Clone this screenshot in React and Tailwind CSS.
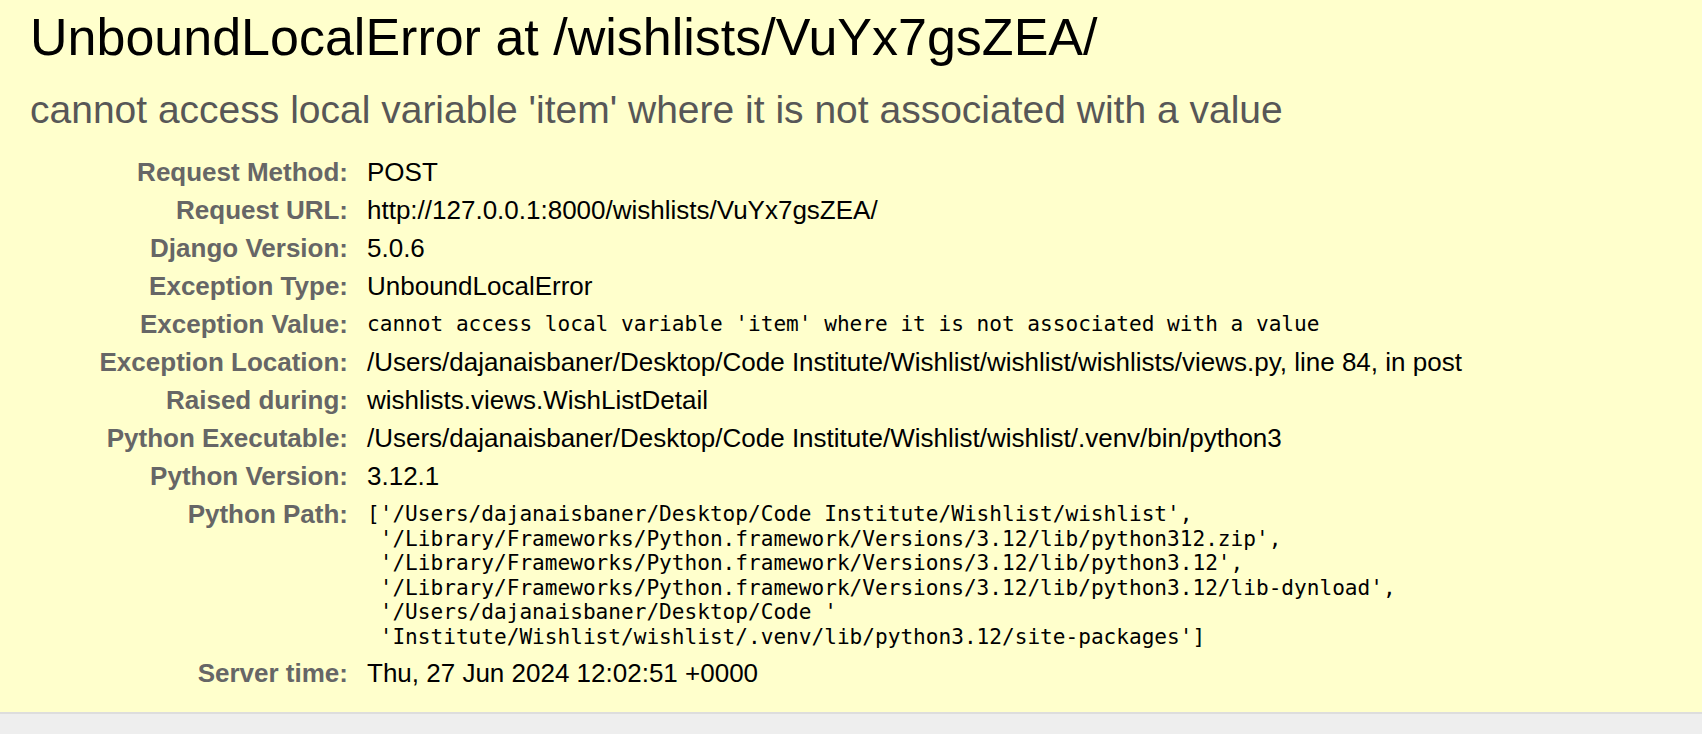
import React from 'react';

const pythonPath = `['/Users/dajanaisbaner/Desktop/Code Institute/Wishlist/wishlist',
 '/Library/Frameworks/Python.framework/Versions/3.12/lib/python312.zip',
 '/Library/Frameworks/Python.framework/Versions/3.12/lib/python3.12',
 '/Library/Frameworks/Python.framework/Versions/3.12/lib/python3.12/lib-dynload',
 '/Users/dajanaisbaner/Desktop/Code '
 'Institute/Wishlist/wishlist/.venv/lib/python3.12/site-packages']`;

const rows = [
    { label: 'Request Method:', value: 'POST' },
    { label: 'Request URL:', value: 'http://127.0.0.1:8000/wishlists/VuYx7gsZEA/' },
    { label: 'Django Version:', value: '5.0.6' },
    { label: 'Exception Type:', value: 'UnboundLocalError' },
    { label: 'Exception Value:', value: "cannot access local variable 'item' where it is not associated with a value", mono: true },
    { label: 'Exception Location:', value: '/Users/dajanaisbaner/Desktop/Code Institute/Wishlist/wishlist/wishlists/views.py, line 84, in post' },
    { label: 'Raised during:', value: 'wishlists.views.WishListDetail' },
    { label: 'Python Executable:', value: '/Users/dajanaisbaner/Desktop/Code Institute/Wishlist/wishlist/.venv/bin/python3' },
    { label: 'Python Version:', value: '3.12.1' },
    { label: 'Python Path:', value: pythonPath, mono: true },
    { label: 'Server time:', value: 'Thu, 27 Jun 2024 12:02:51 +0000' },
];

const App = () => {
    return (
        <div className="min-h-screen bg-[#eee] font-['Liberation_Sans',Arial,sans-serif] text-black">
            <div className="bg-[#ffc] border-b-2 border-[#ddd] pt-[7px] pb-[20px] pl-[30px] pr-[40px]">
                <h1 className="text-[52px] leading-[60px] font-normal">UnboundLocalError at /wishlists/VuYx7gsZEA/</h1>
                <pre className="mt-[20px] mb-[21px] text-[39px] leading-[45px] text-[#575757] font-['Liberation_Sans',Arial,sans-serif] whitespace-pre-wrap">
                    cannot access local variable 'item' where it is not associated with a value
                </pre>

                <div className="grid grid-cols-[331px_1fr] text-[26px] leading-[30px]">
                    {rows.map((row) => (
                        <React.Fragment key={row.label}>
                            <div className="pt-[4px] pb-[4px] pl-[6px] pr-[13px] text-right font-bold text-[#666]">
                                {row.label}
                            </div>
                            <div className="pt-[4px] pb-[4px] pl-[6px] pr-[6px]">
                                {row.mono ? (
                                    <pre className="font-['DejaVu_Sans_Mono',monospace] text-[21.1px] leading-[24.6px] pt-[3px] whitespace-pre-wrap">{row.value}</pre>
                                ) : (
                                    row.value
                                )}
                            </div>
                        </React.Fragment>
                    ))}
                </div>
            </div>
        </div>
    );
};

export default App;
